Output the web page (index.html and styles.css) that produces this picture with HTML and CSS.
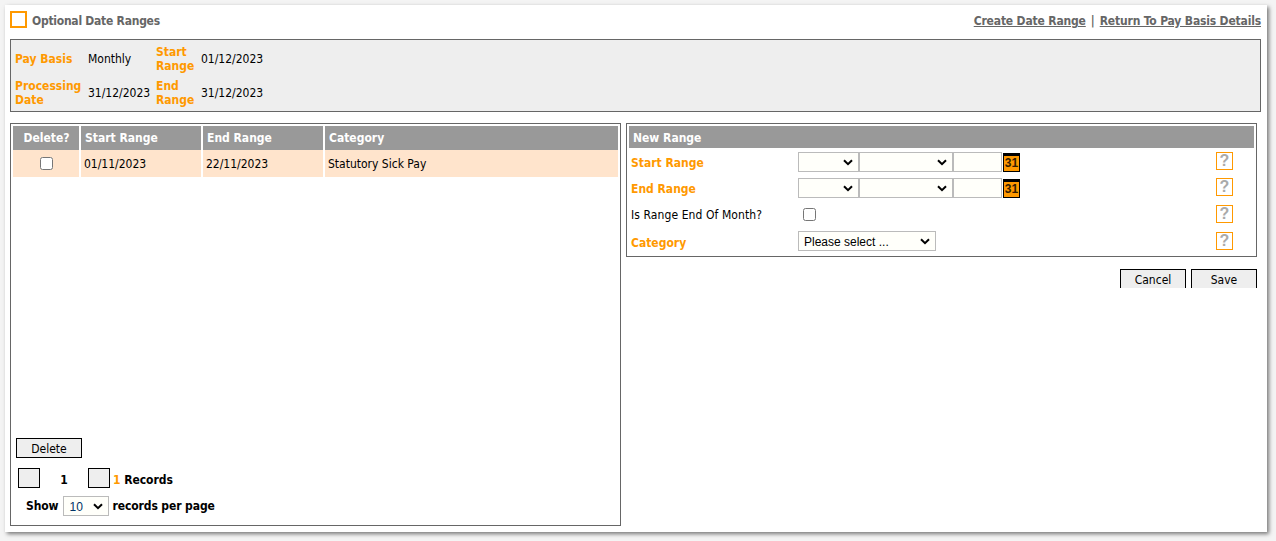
FILE: index.html
```html
<!DOCTYPE html>
<html lang="en">
<head>
<meta charset="utf-8">
<title>Optional Date Ranges</title>
<link rel="stylesheet" href="styles.css">
</head>
<body>
<main class="card">
  <header class="top">
    <div class="title"><span class="title-box"></span><span class="title-text">Optional Date Ranges</span></div>
    <nav class="links"><a href="#">Create Date Range</a><span class="sep">|</span><a href="#">Return To Pay Basis Details</a></nav>
  </header>
  <section class="info">
    <div class="info-grid">
      <div class="lab">Pay Basis</div><div class="val">Monthly</div><div class="lab">Start Range</div><div class="val">01/12/2023</div>
      <div class="lab">Processing Date</div><div class="val">31/12/2023</div><div class="lab">End Range</div><div class="val">31/12/2023</div>
    </div>
  </section>
  <div class="columns">
    <section class="left">
      <div class="tbl head">
        <div class="th center">Delete?</div><div class="th">Start Range</div><div class="th">End Range</div><div class="th">Category</div>
      </div>
      <div class="tbl row">
        <div class="td center"><input type="checkbox" class="chk"></div><div class="td">01/11/2023</div><div class="td">22/11/2023</div><div class="td">Statutory Sick Pay</div>
      </div>
      <div class="left-foot">
        <button class="btn del" type="button">Delete</button>
        <div class="pager"><span class="pbox"></span><b class="pnum">1</b><span class="pbox"></span><b class="count"><span class="org">1</span> Records</b></div>
        <div class="perpage"><b>Show</b><select class="sel small"><option>10</option></select><b>records per page</b></div>
      </div>
    </section>
    <div class="right">
      <section class="form">
        <div class="form-head">New Range</div>
        <div class="frow"><div class="flab org b">Start Range</div><div class="fctl"><select class="sel d1"><option></option></select><select class="sel d2"><option></option></select><input class="yr" type="text"><span class="cal">31</span></div><span class="help up">?</span></div>
        <div class="frow"><div class="flab org b">End Range</div><div class="fctl"><select class="sel d1"><option></option></select><select class="sel d2"><option></option></select><input class="yr" type="text"><span class="cal">31</span></div><span class="help up">?</span></div>
        <div class="frow"><div class="flab plain">Is Range End Of Month?</div><div class="fctl"><input type="checkbox" class="chk inset"></div><span class="help">?</span></div>
        <div class="frow last"><div class="flab org b cat">Category</div><div class="fctl"><select class="sel catsel"><option>Please select ...</option></select></div><span class="help">?</span></div>
      </section>
      <div class="actions"><button class="btn clip" type="button">Cancel</button><button class="btn clip" type="button">Save</button></div>
    </div>
  </div>
</main>
</body>
</html>
```
FILE: styles.css
```css
* { box-sizing: border-box; }
html, body { margin: 0; height: 100%; }
body {
  background: #f4f4f4;
  font-family: "DejaVu Sans Condensed", "DejaVu Sans", sans-serif;
  font-size: 12px;
  color: #000;
  padding: 5px 9px 9px 5px;
  overflow: hidden;
}
.card {
  background: #fff;
  height: 527px;
  padding: 6px 6px 0 5px;
  box-shadow: 2px 2px 4px #777;
}
.top { display: flex; justify-content: space-between; align-items: center; height: 17px; }
.title { display: flex; align-items: center; gap: 5px; font-weight: bold; color: #666; }
.title-box { width: 17px; height: 17px; border: 2px solid #f90; }
.title-text { letter-spacing: -0.25px; padding-top: 2px; }
.links { font-weight: bold; color: #666; display: flex; gap: 5px; letter-spacing: -0.17px; padding-top: 3px; }
.links a { color: #666; text-decoration: underline; }
.sep { color: #666; font-weight: bold; letter-spacing: 0; }
.info {
  margin-top: 11px; height: 73px;
  background: #eee; border: 1px solid #666;
  padding: 2px 4px;
}
.info-grid {
  display: grid;
  grid-template-columns: 73px 68px 45px auto;
  grid-auto-rows: 34px;
  align-items: center;
  justify-content: start;
  line-height: 14px;
}
.lab { color: #f90; font-weight: bold; font-size: 12px; }
.val { color: #000; }
.columns { display: flex; gap: 5px; margin-top: 11px; align-items: flex-start; }
.left {
  width: 611px; height: 403px;
  border: 1px solid #666; padding: 2px;
  display: flex; flex-direction: column;
}
.tbl { display: grid; grid-template-columns: 66px 120px 120px 1fr; column-gap: 2px; }
.head { height: 22px; }
.row { grid-auto-rows: 27px; margin-top: 2px; }
.th { background: #999; color: #fff; font-weight: bold; font-size: 12px; padding: 0 4px; line-height: 25px; }
.th.center { padding-left: 1px; padding-right: 0; }
.td { background: #ffe4cc; padding: 0 3px; line-height: 28px; }
.center { text-align: center; padding: 0; }
.td.center { line-height: 26px; }
.chk { width: 13px; height: 13px; margin: 0; vertical-align: middle; }
.left-foot { margin-top: auto; padding: 0 0 7px 3px; }
.btn {
  width: 66px; height: 20px; padding: 0;
  background: #eee; border: 1px solid #000;
  font: inherit; color: #000;
}
.del { display: block; padding-top: 1px; }
.pager { display: flex; align-items: center; margin: 10px 0 0 2px; height: 20px; font-weight: bold; }
.pager .count, .pager .pnum { padding-top: 3px; }
.pbox { width: 22px; height: 20px; background: #eee; border: 1px solid #000; }
.pnum { width: 48px; text-align: center; }
.count { margin-left: 3px; letter-spacing: -0.05px; }
.org { color: #f90; }
.perpage { display: flex; align-items: center; margin: 8px 0 0 10px; height: 20px; gap: 4px; font-size: 12px; letter-spacing: -0.1px; }
.sel {
  appearance: none;
  height: 20px; margin: 0; padding: 1px 0 0 5px;
  background: #fffffa url("data:image/svg+xml,%3Csvg xmlns='http://www.w3.org/2000/svg' width='10' height='7'%3E%3Cpath d='M1 1.2l4 4 4-4' fill='none' stroke='%23000' stroke-width='2'/%3E%3C/svg%3E") no-repeat right 5px center;
  border: 1px solid #bbb; border-radius: 0;
  font: 12px "Liberation Sans", sans-serif; color: #000;
  letter-spacing: 0;
}
.small { width: 46px; color: #036; margin-left: 1px; margin-right: -1px; }
.right { width: 631px; }
.form { border: 1px solid #666; padding: 2px 2px 0; height: 134px; }
.form-head { background: #999; color: #fff; font-weight: bold; font-size: 12px; height: 22px; line-height: 25px; padding-left: 4px; }
.frow { display: flex; align-items: center; height: 26px; padding: 0 0 0 2px; margin-top: 1px; }
.frow + .frow { margin-top: 0; }
.frow.last { margin-top: 1px; }
.flab { width: 167px; }
.plain { letter-spacing: 0.09px; padding-top: 1px; }
.b { font-weight: bold; font-size: 12px; padding-top: 2px; }
.b.cat { padding-top: 4px; }
.fctl { width: 418px; display: flex; align-items: center; }
.d1 { width: 61px; }
.d2 { width: 94px; }
.yr { width: 49px; height: 20px; margin: 0; padding: 0; background: #fffffa; border: 1px solid #bbb; }
.cal {
  width: 17px; height: 19px; margin-left: 1px;
  background: #f90; border: 1px solid #000; border-top-width: 3px;
  font: bold 12px/15px "Liberation Sans", sans-serif; text-align: center; color: #331c00;
}
.inset { margin-left: 5px; }
.catsel { width: 138px; }
.help {
  width: 17px; height: 18px; border: 1px solid #f90; background: #fff;
  color: #aaa; font: bold 16px/16px "Liberation Sans", sans-serif; text-align: center;
}
.help.up { margin-top: -1px; margin-bottom: 1px; }
.actions { display: flex; justify-content: flex-end; gap: 5px; margin-top: 12px; height: 19px; overflow: hidden; }
.clip { height: 24px; line-height: 20px; padding-bottom: 3px; }
```
